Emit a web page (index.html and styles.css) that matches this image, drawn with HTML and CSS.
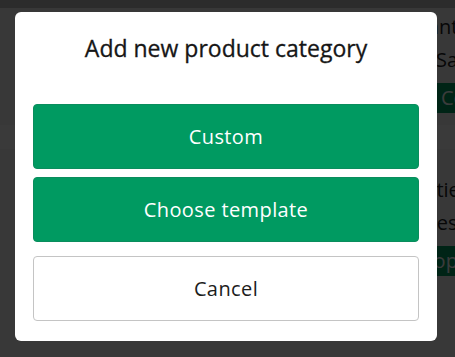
FILE: index.html
```html
<!DOCTYPE html>
<html lang="en">
<head>
<meta charset="UTF-8" />
<meta name="viewport" content="width=device-width, initial-scale=1" />
<title>Product categories</title>
<link rel="stylesheet" href="styles.css">
</head>
<body>
<header class="topbar"></header>
<div class="page">
  <div class="card">
    <div class="card-line indent-a">Quantities</div>
    <div class="card-line indent-b">Sales</div>
    <div class="card-btn pad-a">Copy</div>
  </div>
  <div class="divider"></div>
  <div class="card">
    <div class="card-line indent-c">Quantities</div>
    <div class="card-line indent-d">Prices</div>
    <div class="card-btn pad-b">Copy</div>
  </div>
</div>

<div class="overlay">
  <div class="modal">
    <h1>Add new product category</h1>
    <div class="actions">
      <button class="btn btn-primary">Custom</button>
      <button class="btn btn-primary">Choose template</button>
      <button class="btn btn-cancel">Cancel</button>
    </div>
  </div>
</div>
</body>
</html>
```

FILE: styles.css
```css
* {
  margin: 0; padding: 0; box-sizing: border-box;
  font-family: 'Open Sans', sans-serif;
}
html, body {
  overflow: hidden;
}
body {
  background: #f0f0f0;
  min-height: 100vh;
}
.topbar {
  height: 8px;
  background: #bdbdbd;
}
.page {
  display: flex;
  flex-direction: column;
  padding: 2px 0 0 360px;
  width: 100%;
  overflow: hidden;
}
.card {
  background: #f2f2f2;
}
.card-line {
  font-size: 20px;
  line-height: 33px;
  color: #222;
  white-space: nowrap;
}
.indent-a { padding-left: 40px; }
.indent-b { padding-left: 76px; }
.indent-c { padding-left: 13px; }
.indent-d { padding-left: 42px; }
.card-btn {
  background: #009a61;
  color: #fff;
  font-size: 20px;
  line-height: 30px;
  margin: 7px 0 0 20px;
  white-space: nowrap;
}
.pad-a { padding-left: 61px; }
.pad-b { padding-left: 41px; }
.divider {
  height: 60px;
  margin-left: -360px;
  background: linear-gradient(to bottom, #f0f0f0 0 12px, #fafafa 12px 36px, #f0f0f0 36px);
}
.overlay {
  position: fixed;
  inset: 0;
  background: rgba(0, 0, 0, 0.77);
  display: flex;
  align-items: flex-start;
  padding: 12px 0 0 15px;
}
.modal {
  background: #fff;
  width: 422px;
  border-radius: 6px;
  padding: 18px 18px 20px;
}
h1 {
  font-size: 23px;
  font-weight: 500;
  color: #161616;
  -webkit-text-stroke: 0.3px #161616;
  text-align: center;
  line-height: 36px;
  margin-bottom: 38px;
}
.actions {
  display: flex;
  flex-direction: column;
}
.btn {
  height: 65px;
  border-radius: 4px;
  font-size: 20px;
  font-family: 'Open Sans', sans-serif;
  letter-spacing: 0.4px;
  cursor: pointer;
}
.btn-primary {
  background: #009a61;
  color: #fff;
  border: 1px solid #0a8d5d;
  margin-bottom: 8px;
}
.btn-primary + .btn-cancel {
  margin-top: 6px;
}
.btn-cancel {
  background: #fff;
  color: #1c1c1c;
  border: 1px solid #c4c4c4;
}
```
